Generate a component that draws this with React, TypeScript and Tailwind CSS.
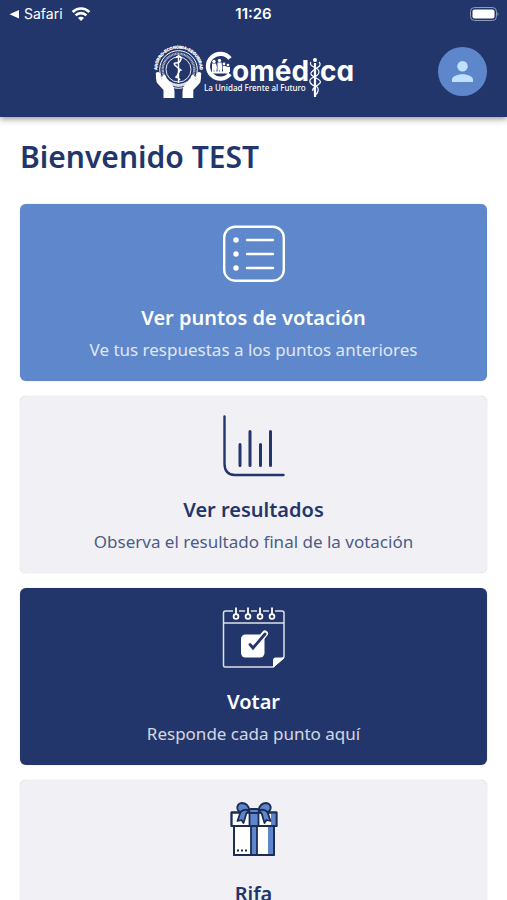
import React from "react";
import clsx from "clsx";

interface MenuCardProps {
    title: string;
    description?: string;
    icon: React.ReactNode;
    variant: "blue" | "light" | "navy";
}

function StatusBar() {
    return (
        <div className="flex h-7 items-center justify-between px-2 text-white">
            <div className="flex flex-1 items-center gap-1">
                <svg className="h-3 w-3" viewBox="0 0 12 12" fill="currentColor">
                    <path d="M11 2v8.400L1.500 6.200z" />
                </svg>
                <span className="text-sm leading-5">Safari</span>
                <svg className="ml-1 h-4 w-5" viewBox="0 0 20 16" fill="none" stroke="currentColor" strokeWidth="2.600">
                    <path d="M1.600 6a12 12 0 0 1 16.800 0M4.600 9.400a7.600 7.600 0 0 1 10.800 0" />
                    <path d="M10 15l-3-3a4.200 4.200 0 0 1 6 0z" fill="currentColor" stroke="none" />
                </svg>
            </div>
            <span className="text-[15px] leading-5 font-semibold">11:26</span>
            <div className="flex flex-1 justify-end">
                <svg className="h-4 w-8" viewBox="0 0 32 16">
                    <rect x="3.500" y="1.500" width="26" height="13" rx="4" fill="none" stroke="#8f9abb" />
                    <rect x="5.500" y="3.500" width="22" height="9" rx="2" fill="#fff" />
                    <path d="M30.500 6v4q2-2 0-4" fill="#8f9abb" />
                </svg>
            </div>
        </div>
    );
}

function Logo() {
    return (
        <svg className="h-[60px] w-[204px]" viewBox="0 -1 204 60" fill="none" stroke="#fff" role="img" aria-label="Comédica">
            <defs>
                <path id="arco" d="M5 28a21.500 21.500 0 0 1 43 0" />
            </defs>
            {/* emblema */}
            <text fill="#fff" strokeWidth="0.300" className="font-['Liberation_Sans'] text-[4px] font-bold" textAnchor="middle">
                <textPath href="#arco" startOffset="50%">AHORRO•ECONOMIA•SEGURIDAD</textPath>
            </text>
            <circle cx="26.500" cy="27.500" r="18.800" strokeWidth="1" />
            <circle cx="26.500" cy="27.500" r="15.800" strokeWidth="2.400" strokeDasharray="1 0.500" opacity="0.650" />
            <circle cx="26.500" cy="27.500" r="12.500" strokeWidth="0.900" />
            <path d="M26.500 13v28" strokeWidth="1.400" />
            <path d="M24 15q6-2 5 2t-5 4 1 4 4 3-3 4-2 3 4 3" strokeWidth="1.500" />
            <path d="M17 40.500q9.500 6 19 0" strokeWidth="3" opacity="0.700" />
            {/* manos */}
            <path
                fill="#fff"
                stroke="none"
                d="M3.800 31q2-2 4.200 0l1.500 7q0-4 2-5t3 3l5 6q3 3 3 7v7H11.500V48l-5.500-6q-2-2-2-6z"
            />
            <path
                fill="#fff"
                stroke="none"
                d="M49.200 31q-2-2-4.200 0l-1.500 7q0-4-2-5t-3 3l-5 6q-3 3-3 7v7h10.800V48l5.700-6q2-2 2-6z"
            />
            {/* C con la familia */}
            <path d="M78 16.500A12.400 12.400 0 1 0 78 32" strokeWidth="4.200" />
            <g fill="#fff" stroke="none">
                <circle cx="62" cy="19.500" r="1.700" />
                <circle cx="67.500" cy="18.500" r="1.700" />
                <circle cx="72" cy="22" r="1.400" />
                <circle cx="76" cy="23" r="1.300" />
                <path d="M60 21.500h4l1 4-1 6h-1l-1-4-1 4h-1zM65.500 20.500h4l1 5-1 6h-1l-1-4-1 4h-1zM71 24h2l3 1h2v5h-7zM60 29.500h17v2H60z" />
            </g>
            <text fill="#fff" stroke="none" y="38.500" className="font-['Inter'] text-[28px] font-bold [font-feature-settings:'cv11']">
                <tspan x="80">oméd</tspan>
                <tspan x="168">ca</tspan>
            </text>
            <text x="52" y="49" fill="#fff" stroke="none" className="font-['Noto_Sans'] text-[8px] font-medium">La Unidad Frente al Futuro</text>
            {/* caduceo */}
            <circle cx="163" cy="18" r="2" fill="#fff" stroke="none" />
            <path d="M163 21v34" strokeWidth="2.200" />
            <path d="M159 20q-2 3 3 5t5 5-5 5-4 5 5 4 3 5-4 4" strokeWidth="1.200" />
            <path d="M167 20q3 3-2 6t-6 5 5 5 4 5-5 4-2 4" strokeWidth="1.200" />
        </svg>
    );
}

function Header() {
    return (
        <header className="z-10 shrink-0 bg-[#23366b] pb-4 shadow-[0_2px_6px_rgba(60,40,40,0.5)]">
            <StatusBar />
            <div className="mt-[13px] grid grid-cols-[1fr_auto_1fr] items-center px-5">
                <span />
                <Logo />
                <button
                    type="button"
                    aria-label="Perfil"
                    className="flex size-[49px] cursor-pointer items-center justify-center justify-self-end rounded-full bg-[#5e86ca]"
                >
                    <svg className="size-[21px]" viewBox="4 4 16 16" fill="#bfe1ff">
                        <circle cx="12" cy="8" r="4" />
                        <path d="M12 14c-2.670 0-8 1.340-8 4v2h16v-2c0-2.660-5.330-4-8-4z" />
                    </svg>
                </button>
            </div>
        </header>
    );
}

function ListIcon() {
    return (
        <svg className="size-16" viewBox="0 0 64 64" fill="none" stroke="#fff" strokeWidth="2.400" strokeLinecap="round">
            <rect x="2.200" y="4.700" width="59.600" height="54" rx="11" />
            <path d="M25 18h26M25 32h26M25 46h26" />
            <g fill="#fff" stroke="none">
                <circle cx="14" cy="18" r="2.700" />
                <circle cx="14" cy="32" r="2.700" />
                <circle cx="14" cy="46" r="2.700" />
            </g>
        </svg>
    );
}

function ChartIcon() {
    return (
        <svg className="size-16" viewBox="0 0 64 64" fill="none" stroke="#23366b" strokeWidth="2.400" strokeLinecap="round">
            <path d="M2.500 2.500v47q0 11 10 11.500h49" />
            <path d="M18 30.500v21M28 17.500v34M38.500 30.500v21M48.500 17.500v34" strokeWidth="3" />
        </svg>
    );
}

function CalendarIcon() {
    return (
        <svg className="size-16" viewBox="0 0 64 64" fill="none" stroke="#fff">
            <path
                d="M11 5H3.500a2 2 0 0 0-2 2v52.500a1.500 1.500 0 0 0 1.500 1.500h48l11-10V7a2 2 0 0 0-2-2h-7M17 5h6M29 5h6M41 5h6M1.500 17h60.500"
                strokeWidth="1.500"
                opacity="0.850"
            />
            <path d="M14 1.500v6.500M26 1.500v6.500M38 1.500v6.500M50 1.500v6.500" strokeWidth="1.800" />
            <g strokeWidth="1.800">
                <circle cx="14" cy="10.500" r="2.400" />
                <circle cx="26" cy="10.500" r="2.400" />
                <circle cx="38" cy="10.500" r="2.400" />
                <circle cx="50" cy="10.500" r="2.400" />
            </g>
            <path d="M51.500 61v-7q0-2 2-2h8.500z" fill="#fff" strokeWidth="1" />
            <rect x="19" y="28.500" width="23.500" height="23" rx="4.500" fill="#fff" stroke="none" />
            <path d="M32 40.500L43 27.500" strokeWidth="6" strokeLinecap="round" />
            <path d="M28 38.500l3 3.500L43 28" stroke="#23366b" strokeWidth="2.800" strokeLinecap="round" />
        </svg>
    );
}

function GiftIcon() {
    return (
        <svg className="size-16" viewBox="0 0 64 64" stroke="#1d2c55" strokeWidth="1.800" strokeLinejoin="round">
            <path d="M12 28h40v29H12z" fill="#fff" />
            <path d="M46 28h5v28h-5z" fill="#5e86ca" stroke="none" />
            <path d="M12 28h40v29H12z" fill="none" />
            <path d="M9.500 14.500h45v13.500h-45z" fill="#fff" />
            <path d="M49 15.500h5v11.500h-5z" fill="#5e86ca" stroke="none" />
            <path d="M9.500 14.500h45v13.500h-45z" fill="none" />
            <path d="M29 28h6v29h-6z" fill="#5e86ca" />
            <path d="M27.500 13h9v15h-9z" fill="#5e86ca" />
            <path d="M27.500 13q-1-8-8-8-5 1-4 6 1 3 3 3l-3 9 4-1 2 3 3-10z" fill="#5e86ca" />
            <path d="M36.500 13q1-8 8-8 5 1 4 6-1 3-3 3l3 9-4-1-2 3-3-10z" fill="#5e86ca" />
            <path d="M27.500 13q-5-3-9 1M36.500 13q5-3 9 1" fill="none" />
            <rect x="27" y="11" width="10" height="4" rx="2" fill="#5e86ca" />
            <path d="M15 52.500h2M19 52.500h2M23 52.500h2" />
        </svg>
    );
}

function MenuCard({ title, description, icon, variant }: MenuCardProps) {
    return (
        <button
            type="button"
            className={clsx(
                "flex min-h-[177px] w-full shrink-0 cursor-pointer flex-col items-center rounded-md px-4 pt-[18px] shadow-[0_0_1px_rgba(35,54,107,0.4)]",
                variant === "blue" && "bg-[#5e88cb] text-white",
                variant === "light" && "bg-[#f1f1f5] text-[#23366b]",
                variant === "navy" && "bg-[#23366b] text-white"
            )}
        >
            {icon}
            <span className="mt-4 text-xl leading-8 font-semibold">{title}</span>
            {description && <span className="mt-1 text-[17px] leading-6 opacity-80">{description}</span>}
        </button>
    );
}

function App() {
    return (
        <div className="flex h-screen flex-col bg-white font-['Inter',sans-serif]">
            <Header />
            <main className="flex flex-1 flex-col overflow-y-auto px-5 pt-5 pb-5 font-['Noto_Sans',sans-serif] [scrollbar-width:none]">
                <h1 className="text-3xl leading-10 font-semibold text-[#23366b]">Bienvenido TEST</h1>
                <div className="mt-[27px] flex flex-col gap-[15px]">
                    <MenuCard
                        variant="blue"
                        icon={<ListIcon />}
                        title="Ver puntos de votación"
                        description="Ve tus respuestas a los puntos anteriores"
                    />
                    <MenuCard
                        variant="light"
                        icon={<ChartIcon />}
                        title="Ver resultados"
                        description="Observa el resultado final de la votación"
                    />
                    <MenuCard variant="navy" icon={<CalendarIcon />} title="Votar" description="Responde cada punto aquí" />
                    <MenuCard variant="light" icon={<GiftIcon />} title="Rifa" />
                </div>
            </main>
        </div>
    );
}

export default App;
